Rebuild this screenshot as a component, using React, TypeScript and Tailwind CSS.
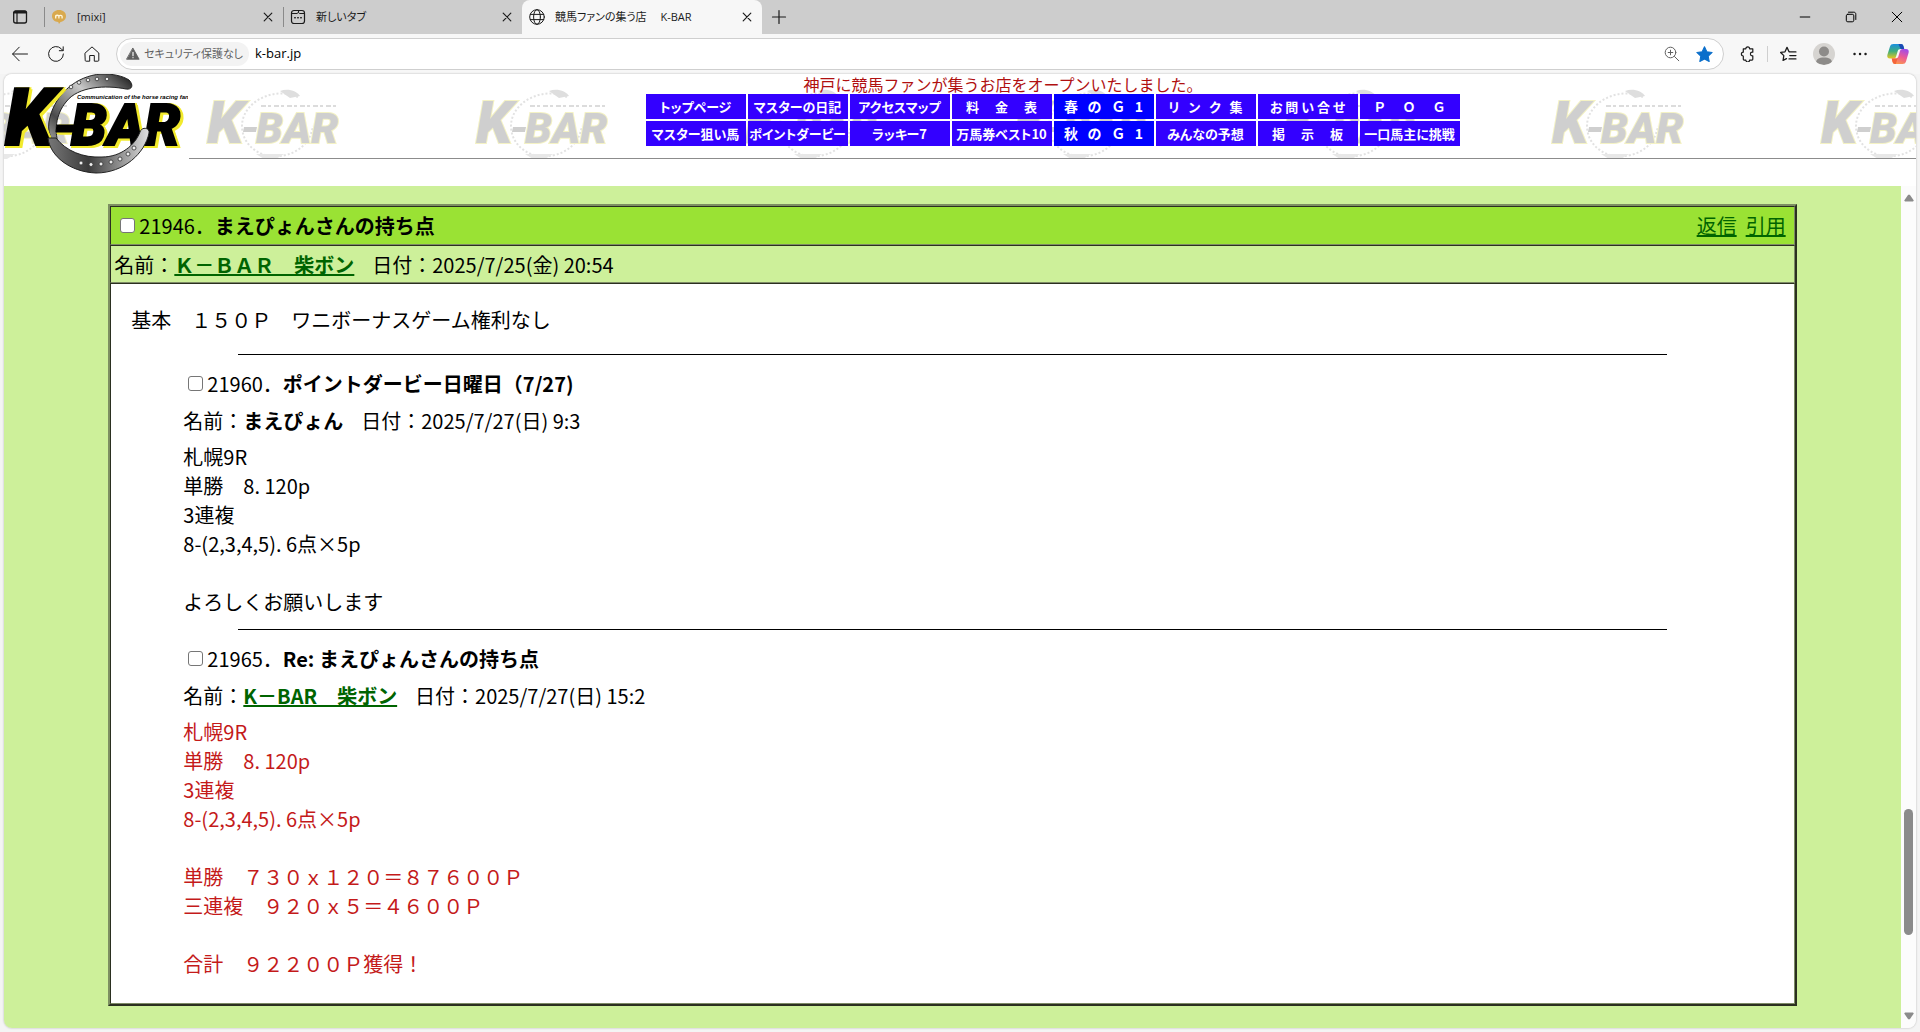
import React from 'react';

const jpFont = "font-['Noto_Sans_CJK_JP',sans-serif]";
const uiFont = "font-['Open_Sans','Noto_Sans_CJK_JP',sans-serif]";

/* ---------- icons ---------- */

interface IconProps {
  children: React.ReactNode;
  className?: string;
}

function Icon({ children, className = 'size-4' }: IconProps) {
  return (
    <svg
      viewBox="0 0 16 16"
      className={className}
      fill="none"
      stroke="currentColor"
      strokeWidth={1}
      strokeLinecap="round"
      strokeLinejoin="round"
      aria-hidden="true"
    >
      {children}
    </svg>
  );
}

function CloseIcon() {
  return (
    <Icon className="size-4">
      <path d="M4.2 4.2l7.6 7.6M11.8 4.2l-7.6 7.6" strokeWidth={1.2} />
    </Icon>
  );
}

function MixiIcon() {
  return (
    <svg viewBox="0 0 16 16" className="size-4" aria-hidden="true">
      <path d="M8 1c4 0 7 2.4 7 6 0 3.200-2.400 5.400-5.500 5.900L8 15l-.8-2C3.600 12.700 1 10.500 1 7c0-3.600 3-6 7-6z" fill="#d9a94e" />
      <path d="M4.700 9.600V6.200M4.700 7.200c.6-1.300 3-1.300 3.200.2v2.200M7.900 7.200c.7-1.300 3.200-1.200 3.200.4v2" fill="none" stroke="#fff6dc" strokeWidth={1.300} />
    </svg>
  );
}

function NewTabIcon() {
  return (
    <Icon>
      <rect x="1.500" y="1.500" width="13" height="13" rx="2.500" strokeWidth={1.200} />
      <path d="M1.800 4.500h5.200c1 0 1-1 1.500-1.800M8.500 1.500v1.500c0 1 .5 1.500 1.500 1.500h4.500" />
      <path d="M4.800 8.800h.4M7.800 8.800h.4M10.800 8.800h.4" strokeWidth={1.600} />
    </Icon>
  );
}

function GlobeIcon() {
  return (
    <Icon>
      <circle cx="8" cy="8" r="7.300" />
      <ellipse cx="8" cy="8" rx="3.400" ry="7.300" />
      <path d="M1.400 5.400h13.200M1.400 10.600h13.200" />
    </Icon>
  );
}

function CopilotIcon() {
  return (
    <svg viewBox="0 0 24 24" className="size-6" aria-hidden="true">
      <defs>
        <linearGradient id="cpA" x1="0" y1="0" x2="0" y2="1">
          <stop offset="0" stopColor="#1a8fe0" />
          <stop offset="0.5" stopColor="#3fae7c" />
          <stop offset="1" stopColor="#e9c81e" />
        </linearGradient>
        <linearGradient id="cpB" x1="0.700" y1="0" x2="0.300" y2="1">
          <stop offset="0" stopColor="#a24be8" />
          <stop offset="0.500" stopColor="#ee5a94" />
          <stop offset="1" stopColor="#fb9a4b" />
        </linearGradient>
      </defs>
      <path d="M7.500 2h7.500c1.300 0 2 .8 2.400 2l.8 3h-3.500c-1.800 0-2.600.8-3.100 2.400l-1.500 5c-.5 1.500-1.300 2.200-2.800 2.200H4c-2.200 0-3.200-1.600-2.600-3.800L4 4.500C4.500 2.800 5.700 2 7.500 2z" fill="url(#cpA)" />
      <path d="M12.500 2H15c1.300 0 2 .8 2.400 2l.8 3h-3.600z" fill="#1b4ab4" />
      <path d="M16.500 22H9c-1.300 0-2-.8-2.400-2l-.9-3.400h3.600c1.800 0 2.600-.8 3.100-2.400l1.500-5c.5-1.500 1.300-2.200 2.800-2.200H20c2.200 0 3.200 1.600 2.600 3.800L20 19.500c-.5 1.700-1.700 2.500-3.500 2.500z" fill="url(#cpB)" />
      <path d="M5.700 16.600h3.600c1.200 0 2-.4 2.500-1.200L9.800 22H9c-1.300 0-2-.8-2.400-2z" fill="#f4643a" />
    </svg>
  );
}

/* ---------- browser chrome ---------- */

interface TabProps {
  title: string;
  icon: React.ReactNode;
  width: string;
  active?: boolean;
}

function Tab({ title, icon, width, active = false }: TabProps) {
  return (
    <div
      className={`flex items-center ${width} ${
        active ? 'self-stretch rounded-t-lg bg-[#f7f7f7] pl-[7px]' : 'h-5 border-l border-[#8a8a8a] pl-[6px]'
      }`}
    >
      {icon}
      <span className="grow whitespace-pre pl-[10px] [font-feature-settings:'palt']">{title}</span>
      <button type="button" aria-label="閉じる" className="mr-[7px]">
        <CloseIcon />
      </button>
    </div>
  );
}

function TabStrip() {
  return (
    <div className={`flex h-[34px] shrink-0 items-center bg-[#cdcdcd] text-[11px] text-[#1b1b1b] ${uiFont}`}>
      <button type="button" aria-label="タブ操作" className="ml-3 mr-4">
        <Icon>
          <rect x="1.700" y="2" width="12.800" height="12" rx="2" strokeWidth={1.300} />
          <path d="M2 3.600h12.200M3 2.800h10.500" strokeWidth={2} />
          <path d="M5 4v10" strokeWidth={1.200} />
        </Icon>
      </button>
      <Tab title="[mixi]" icon={<MixiIcon />} width="w-[239px]" />
      <Tab title="新しいタブ" icon={<NewTabIcon />} width="w-[239px]" />
      <Tab title="競馬ファンの集う店　 K-BAR" icon={<GlobeIcon />} width="w-[240px]" active />
      <button type="button" aria-label="新しいタブを開く" className="ml-[9px]">
        <Icon>
          <path d="M8 1.500v13M1.500 8h13" strokeWidth={1.200} />
        </Icon>
      </button>
      <div className="ml-auto mr-[15px] flex gap-[30px] text-black">
        <button type="button" aria-label="最小化">
          <Icon><path d="M3.200 8h9.600" /></Icon>
        </button>
        <button type="button" aria-label="元に戻す">
          <Icon>
            <rect x="3.300" y="5.300" width="7.500" height="7.500" rx="1.500" />
            <path d="M5.500 3.200h5.300c1.300 0 2 .8 2 2v5.300" />
          </Icon>
        </button>
        <button type="button" aria-label="ウィンドウを閉じる">
          <Icon><path d="M3.200 3.200l9.600 9.600M12.800 3.200l-9.600 9.600" /></Icon>
        </button>
      </div>
    </div>
  );
}

function Toolbar() {
  return (
    <div className={`flex h-10 shrink-0 items-center bg-[#f7f7f7] text-[#1b1b1b] ${uiFont}`}>
      <div className="ml-3 flex gap-5">
        <button type="button" aria-label="戻る">
          <Icon><path d="M15.500 8H.7M7.200 1.200L.6 8l6.600 6.800" /></Icon>
        </button>
        <button type="button" aria-label="更新">
          <Icon><path d="M15.400 8a7.400 7.400 0 1 1-2-5.100L15 4.500M15.200.8v3.900h-3.900" /></Icon>
        </button>
        <button type="button" aria-label="ホーム">
          <Icon><path d="M1.200 7L8 .9 14.800 7v7.300c0 .6-.3.900-.9.900h-3.600V9.500H5.700v5.700H2.100c-.6 0-.9-.3-.9-.9z" /></Icon>
        </button>
      </div>
      <div className="ml-4 flex h-8 grow items-center rounded-full border border-[#cfcfcf] bg-white pl-[3px] pr-[10px]">
        <div className="flex h-6 items-center rounded-full bg-[#f3f3f3] px-[6px] text-[#5f5f5f]">
          <Icon className="mr-1 size-[14px]">
            <path d="M8 1.500L15 14H1z" fill="#5f5f5f" stroke="#5f5f5f" />
            <path d="M8 6v4M8 12v.2" stroke="#fff" strokeWidth={1.300} />
          </Icon>
          <span className="text-[11px] [font-feature-settings:'palt']">セキュリティ保護なし</span>
        </div>
        <input
          type="text"
          aria-label="アドレス"
          defaultValue="k-bar.jp"
          className="ml-[6px] min-w-0 grow bg-transparent text-[13px] text-black outline-none"
        />
        <button type="button" aria-label="ズーム" className="mr-4 text-[#606060]">
          <Icon>
            <circle cx="6.500" cy="6.500" r="5.300" />
            <path d="M10.500 10.500l4.300 4.300M6.500 4.200v4.600M4.200 6.500h4.600" />
          </Icon>
        </button>
        <button type="button" aria-label="お気に入りに追加済み" className="text-[#0b6fcb]">
          <Icon className="size-[17px]">
            <path d="M8 .8l2.200 4.600 5 .7-3.700 3.500.9 5L8 12.300l-4.400 2.300.9-5L.8 6.100l5-.7z" fill="currentColor" />
          </Icon>
        </button>
      </div>
      <div className="flex items-center">
        <button type="button" aria-label="拡張機能" className="ml-4 mr-[11px]">
          <Icon>
            <path d="M3.300 2.800h2.500a1.900 1.900 0 0 1 3.800 0h3.200v3.400h-.6a1.800 1.800 0 0 0 0 3.600h.6v3.500c0 .5-.3.800-.8.800H9.600a1.900 1.900 0 0 1-3.800 0H4.100c-.5 0-.8-.3-.8-.8V10a1.900 1.900 0 0 1 0-3.800z" strokeWidth={1.200} />
          </Icon>
        </button>
        <span className="h-4 w-px bg-[#cfcfcf]" />
        <button type="button" aria-label="お気に入り" className="ml-3">
          <Icon className="size-[17px]">
            <path d="M8.800 5.500h-.3L6.600 1.300 4.700 5.500l-4.100.6 3 3-.7 4.400 3.200-1.600M9 5.600h6M9.200 9h5.800M8.500 12.200H15" strokeWidth={1.200} />
          </Icon>
        </button>
        <button type="button" aria-label="プロファイル" className="ml-4 flex size-[22px] items-center justify-center overflow-hidden rounded-full bg-[#d6d4d1]">
          <svg viewBox="0 0 22 22" className="size-[22px]" fill="#8d8b89">
            <circle cx="11" cy="8.500" r="5" />
            <path d="M3 20c0-4 3-5.500 8-5.500s8 1.500 8 5.500l-8 2z" />
          </svg>
        </button>
        <button type="button" aria-label="設定など" className="ml-[17px]">
          <Icon>
            <path d="M2.500 8h.1M8 8h.1M13.500 8h.1" strokeWidth={2.400} />
          </Icon>
        </button>
        <button type="button" aria-label="Copilot" className="ml-[18px] mr-[10px]">
          <CopilotIcon />
        </button>
      </div>
    </div>
  );
}

/* ---------- site header ---------- */

function Logo() {
  return (
    <svg viewBox="0 0 184 100" className="h-[100px] w-[184px]" role="img" aria-label="K-BAR">
      <defs>
        <linearGradient id="shoe" x1="0" y1="1" x2="1" y2="0">
          <stop offset="0" stopColor="#b5b5b5" />
          <stop offset="0.250" stopColor="#4a4a4a" />
          <stop offset="0.600" stopColor="#c9c9c9" />
          <stop offset="1" stopColor="#111" />
        </linearGradient>
        <linearGradient id="shoeFront" x1="0" y1="0" x2="1" y2="0">
          <stop offset="0" stopColor="#777" />
          <stop offset="0.400" stopColor="#3c3c3c" />
          <stop offset="1" stopColor="#e0e0e0" />
        </linearGradient>
      </defs>
      <path
        d="M122 15C102 11 74 12 62 28C52 40 49 58 56 74C47 68 42 57 46 43C52 20 72 2 97 0C108-.5 119 2 125 6C130 11 128 16 122 15z"
        fill="url(#shoe)"
        stroke="#222"
      />
      <g
        className="[filter:drop-shadow(2px_0_0_#f2ea2c)_drop-shadow(1px_2px_0_#f2ea2c)]"
        fill="#000"
        stroke="#000"
        strokeWidth={2}
        fontFamily="Roboto, 'Liberation Sans', sans-serif"
        fontWeight={900}
        fontStyle="italic"
      >
        <text x="1" y="71" fontSize="80">K</text>
        <text x="67" y="71" fontSize="57">BAR</text>
        <path d="M53 51h17l-1 7H52z" strokeWidth={1} />
      </g>
      <text x="73" y="25" fontFamily="'Liberation Sans', sans-serif" fontWeight={700} fontStyle="italic" fontSize="6" fill="#000">
        Communication of the horse racing fan
      </text>
      <path
        d="M44 64C46 82 66 98 92 99C120 99 141 79 145 59C146 54 138 52 136 58C131 71 117 83 98 83C79 84 62 77 52 64z"
        fill="url(#shoeFront)"
        stroke="#222"
      />
      <g fill="#eee" stroke="#333" strokeWidth={0.800}>
        <circle cx="67" cy="13" r="1.800" />
        <circle cx="75" cy="8.500" r="1.800" />
        <circle cx="84" cy="6" r="1.800" />
        <circle cx="93" cy="5" r="1.800" />
        <circle cx="103" cy="5" r="1.800" />
        <circle cx="77" cy="89" r="2" />
        <circle cx="87" cy="90.500" r="2" />
        <circle cx="97" cy="90" r="2" />
        <circle cx="107" cy="88" r="2" />
        <circle cx="116" cy="85" r="2" />
        <circle cx="124" cy="80" r="2" />
        <circle cx="130" cy="74" r="2" />
      </g>
    </svg>
  );
}

// faded logo tiled behind the whole header
function HeaderBackdrop() {
  return (
    <svg className="absolute inset-0 h-full w-full" aria-hidden="true">
      <defs>
        <pattern id="mark" x="-67" y="14" width="269" height="200" patternUnits="userSpaceOnUse">
          <path
            d="M92 9C68-2 36 14 36 38C36 58 56 73 80 67C98 62 105 50 107 38"
            fill="none"
            stroke="#e2e2e2"
            strokeWidth={2}
            strokeDasharray="2 2"
          />
          <path d="M74 3c8-3 17 0 20 5l-10 2z" fill="#dedede" />
          <path d="M50 66h28l-8 5H58z" fill="#e8e8e8" />
          <g
            fontFamily="Roboto, 'Liberation Sans', sans-serif"
            fontWeight={900}
            fontStyle="italic"
            fill="#cfcfcf"
            stroke="#f4f2c4"
            strokeWidth={2}
            paintOrder="stroke"
          >
            <text x="1" y="55" fontSize="59">K</text>
            <text x="50" y="55" fontSize="43">BAR</text>
          </g>
          <path d="M38 39h13l-1 5H37z" fill="#cfcfcf" />
          <path d="M55 18h78" stroke="#dcdcdc" strokeDasharray="5 2 3 3" strokeWidth={2} />
        </pattern>
      </defs>
      <rect width="100%" height="100%" fill="url(#mark)" />
    </svg>
  );
}

const menu = [
  { label: 'トップページ' },
  { label: 'マスターの日記' },
  { label: 'アクセスマップ' },
  { label: '料　 金　 表' },
  { label: '春   の   Ｇ   1', race: true },
  { label: 'リ   ン   ク   集' },
  { label: 'お 問 い 合 せ' },
  { label: 'Ｐ　  Ｏ　  Ｇ' },
  { label: 'マスター狙い馬' },
  { label: 'ポイントダービー' },
  { label: 'ラッキー7' },
  { label: '万馬券ベスト10' },
  { label: '秋   の   Ｇ   1', race: true },
  { label: 'みんなの予想' },
  { label: '掲　 示　 板' },
  { label: '一口馬主に挑戦' },
];

function SiteHeader() {
  return (
    <header className="relative flex h-28 shrink-0 overflow-hidden bg-white">
      <HeaderBackdrop />
      <a href="#top" className="relative shrink-0">
        <Logo />
      </a>
      <div className="relative ml-px flex h-[85px] grow flex-col items-center border-b border-[#8c8c8c]">
        <div className="w-[814px]">
          <p className="pl-[158px] text-[16px] leading-5 text-[#b01010]">
            神戸に競馬ファンが集うお店をオープンいたしました。
          </p>
          <nav className="grid grid-cols-8 gap-[2px]">
            {menu.map((item) => (
              <a
                key={item.label}
                href="#menu"
                className={`flex h-[25px] items-center justify-center whitespace-pre font-bold text-white ${
                  item.race ? 'bg-[#0000ff] text-[14px]' : "bg-[#3300ff] text-[13px] [font-feature-settings:'palt']"
                }`}
              >
                {item.label}
              </a>
            ))}
          </nav>
        </div>
      </div>
    </header>
  );
}

/* ---------- bulletin board ---------- */

const linkStyle = 'text-[#006400] underline';

interface PostTitleProps {
  id: number;
  title: string;
}

function PostTitle({ id, title }: PostTitleProps) {
  return (
    <label className="flex items-center">
      <input
        type="checkbox"
        className="mr-1 size-[15px] appearance-none rounded-[3px] border border-[#767676] bg-white"
      />
      {id}．<b>{title}</b>
    </label>
  );
}

interface BylineProps {
  name: string;
  date: string;
  linked?: boolean;
}

function Byline({ name, date, linked = false }: BylineProps) {
  return (
    <p>
      名前：
      {linked ? <a href="#mail" className={`font-bold ${linkStyle}`}>{name}</a> : <b>{name}</b>}
      &nbsp;&nbsp;&nbsp;&nbsp;日付：{date}
    </p>
  );
}

const replies = [
  {
    id: 21960,
    title: 'ポイントダービー日曜日（7/27)',
    name: 'まえぴょん',
    date: '2025/7/27(日) 9:3',
    linked: false,
    color: 'text-black',
    body: '札幌9R\n単勝　8. 120p\n3連複\n8-(2,3,4,5). 6点×5p\n\nよろしくお願いします',
  },
  {
    id: 21965,
    title: 'Re: まえぴょんさんの持ち点',
    name: 'K－BAR　柴ボン',
    date: '2025/7/27(日) 15:2',
    linked: true,
    color: 'text-[#c41a1a]',
    body:
      '札幌9R\n単勝　8. 120p\n3連複\n8-(2,3,4,5). 6点×5p\n\n' +
      '単勝　７３０ｘ１２０＝８７６００Ｐ\n三連複　９２０ｘ５＝４６００Ｐ\n\n合計　９２２００Ｐ獲得！',
  },
];

const cell = 'border border-t-[#2b3020] border-l-[#2b3020] border-b-[#7d8a66] border-r-[#7d8a66]';

function Thread() {
  return (
    <article className="mx-auto w-[89%] border-2 border-t-[#7d8f62] border-l-[#7d8f62] border-b-[#2b3020] border-r-[#2b3020] text-[20px] leading-[29px] text-black">
      <div className={`flex items-center justify-between bg-[#9ae234] py-1 pl-[9px] pr-2 ${cell}`}>
        <PostTitle id={21946} title="まえぴょんさんの持ち点" />
        <div className="flex gap-[9px]">
          <a href="#reply" className={linkStyle}>返信</a>
          <a href="#quote" className={linkStyle}>引用</a>
        </div>
      </div>
      <div className={`bg-[#cdf09a] pb-[3px] pl-[3px] pt-1 ${cell}`}>
        <Byline name="Ｋ－ＢＡＲ　柴ボン" date="2025/7/25(金) 20:54" linked />
      </div>
      <div className={`bg-white pb-3 pt-[21px] ${cell}`}>
        <p className="pb-5 pl-5">基本　１５０Ｐ　ワニボーナスゲーム権利なし</p>
        {replies.map((reply) => (
          <section key={reply.id}>
            <hr className="mx-auto w-[85%] border-t border-black" />
            <div className="pb-[13px] pl-[72px] pt-[14px]">
              <div className="pl-[5px]">
                <PostTitle id={reply.id} title={reply.title} />
              </div>
              <div className="pb-[7px] pt-2">
                <Byline name={reply.name} date={reply.date} linked={reply.linked} />
              </div>
              <p className={`whitespace-pre-line ${reply.color}`}>{reply.body}</p>
            </div>
          </section>
        ))}
      </div>
    </article>
  );
}

function ScrollBar() {
  return (
    <div className="flex w-[15px] shrink-0 flex-col items-center bg-[#fcfcfc] py-2" aria-hidden="true">
      <svg viewBox="0 0 10 8" className="h-2 w-[10px]" fill="#8b8b8b">
        <path d="M4.200.8h1.600L9.800 6.500 9 7.500H1L.2 6.500z" />
      </svg>
      <div className="flex-[607]" />
      <div className="w-[9px] flex-[126] rounded-full bg-[#8b8b8b]" />
      <div className="flex-[77]" />
      <svg viewBox="0 0 10 8" className="h-2 w-[10px]" fill="#8b8b8b">
        <path d="M4.200 7.200h1.600L9.800 1.500 9 .5H1L.2 1.500z" />
      </svg>
    </div>
  );
}

export default function App() {
  return (
    <div className={`flex h-screen flex-col overflow-hidden bg-[#f4f4f4] ${jpFont}`}>
      <TabStrip />
      <Toolbar />
      <div className="mx-1 mb-1 flex min-h-0 grow flex-col overflow-hidden rounded-lg shadow-[0_0_2px_#aaa]">
        <SiteHeader />
        <div className="flex min-h-0 grow">
          <main className="min-w-0 grow overflow-hidden bg-[#cdf09a] pt-[18px]">
            <Thread />
          </main>
          <ScrollBar />
        </div>
      </div>
    </div>
  );
}
